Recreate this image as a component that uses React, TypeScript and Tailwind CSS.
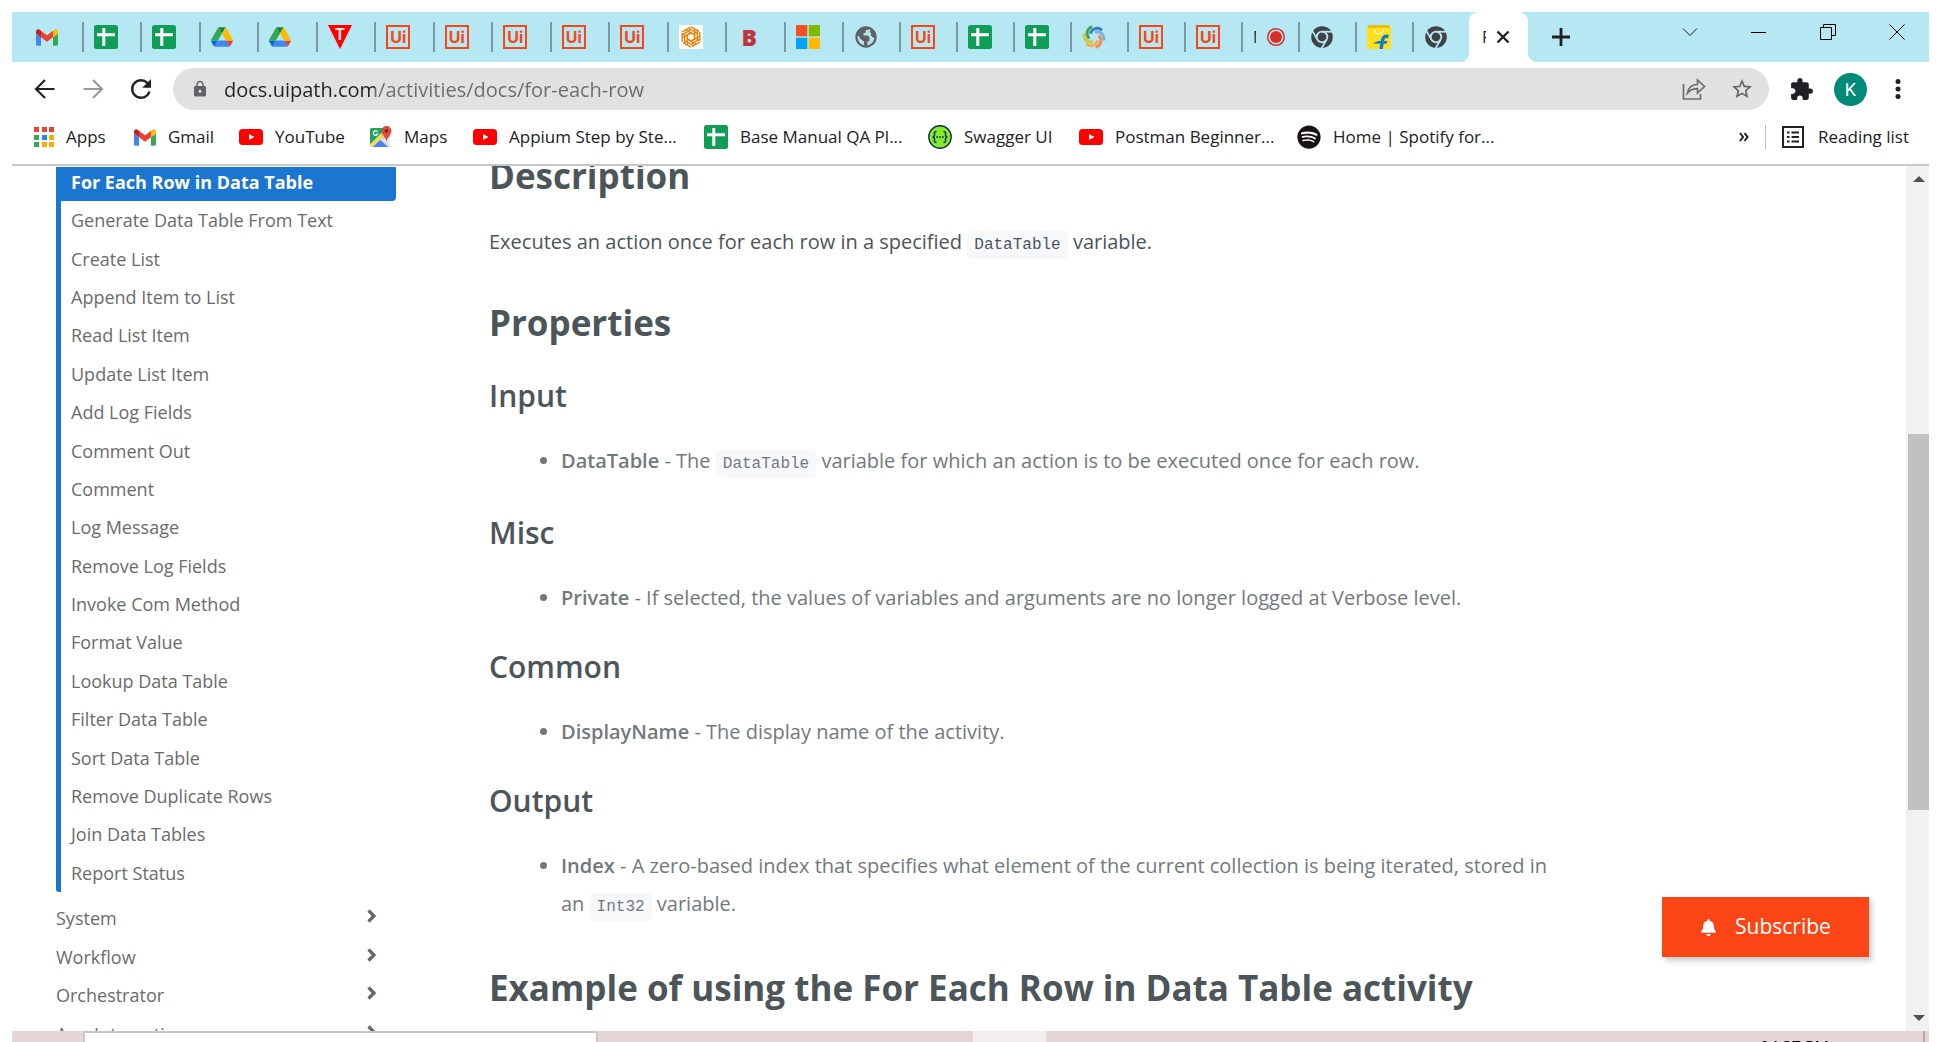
import type { ReactNode } from "react";
import { FaBell, FaSpotify } from "react-icons/fa";
import { MdExtension, MdLock, MdRefresh, MdStarBorder } from "react-icons/md";

const OPEN_SANS = "font-['Open_Sans','Noto_Sans',sans-serif]";

function Gmail() {
  return (
    <svg viewBox="52 42 88 66" className="h-[17px] w-[22px]" aria-hidden="true">
      <path fill="#4285f4" d="M58 108h14V74L52 59v43c0 3.32 2.69 6 6 6" />
      <path fill="#34a853" d="M120 108h14c3.32 0 6-2.69 6-6V59l-20 15" />
      <path fill="#fbbc04" d="M120 48v26l20-15v-8c0-7.42-8.47-11.65-14.4-7.2" />
      <path fill="#ea4335" d="M72 74V48l24 18 24-18v26L96 92" />
      <path fill="#c5221f" d="M52 51v8l20 15V48l-5.6-4.2c-5.94-4.45-14.4-.22-14.4 7.2" />
    </svg>
  );
}

function Sheets() {
  return (
    <svg viewBox="0 0 24 24" className="size-6" aria-hidden="true">
      <rect width="24" height="24" rx="2.5" fill="#109d58" />
      <path d="M9.8 3v18M3 9.8h18" stroke="#fff" strokeWidth="3" />
    </svg>
  );
}

function Drive() {
  return (
    <svg viewBox="0 0 87.3 78" className="h-5 w-[22px]" aria-hidden="true">
      <path fill="#0066da" d="m6.6 66.85 3.85 6.65c.8 1.4 1.95 2.5 3.3 3.3l13.75-23.8h-27.5c0 1.55.4 3.1 1.2 4.5z" />
      <path fill="#34a853" d="m43.65 25-13.75-23.8c-1.35.8-2.5 1.9-3.3 3.3l-25.4 44a9.06 9.06 0 0 0 -1.2 4.5h27.5z" />
      <path fill="#ea4335" d="m73.55 76.8c1.35-.8 2.5-1.9 3.3-3.3l1.6-2.75 7.65-13.25c.8-1.4 1.2-2.95 1.2-4.5h-27.502l5.852 11.5z" />
      <path fill="#188038" d="m43.65 25 13.75-23.8c-1.35-.8-2.9-1.2-4.5-1.2h-18.5c-1.6 0-3.15.45-4.5 1.2z" />
      <path fill="#4285f4" d="m59.8 53h-32.3l-13.75 23.8c1.35.8 2.9 1.2 4.5 1.2h50.8c1.6 0 3.15-.45 4.5-1.2z" />
      <path fill="#fbbc04" d="m73.4 26.5-12.7-22c-.8-1.4-1.95-2.5-3.3-3.3l-13.75 23.8 16.15 28h27.45c0-1.55-.4-3.1-1.2-4.5z" />
    </svg>
  );
}

function Triangle() {
  return (
    <svg viewBox="0 0 24 24" className="size-6" aria-hidden="true">
      <path d="M0 0h24L12 24z" fill="#fe0000" />
      <text x="12" y="15" textAnchor="middle" fontFamily="Liberation Sans" fontWeight="700" fontSize="16" fill="#dfe6e9">
        T
      </text>
    </svg>
  );
}

function UiPath() {
  return (
    <span className="flex size-6 items-center justify-center border-[2px] border-[#fa4616] font-['Inter',sans-serif] text-[16px] leading-none font-bold text-[#fa4616]">
      Ui
    </span>
  );
}

function Hexagon() {
  const sides = [0, 60, 120, 180, 240, 300];
  return (
    <svg viewBox="-12 -12 24 24" className="size-6" aria-hidden="true">
      <rect x="-12" y="-12" width="24" height="24" fill="#fff" />
      <g fill="none" stroke="#e8830c" strokeWidth="1.4">
        {sides.map((a) => (
          <path key={a} transform={`rotate(${a})`} d="M0 -10.200 8 -5.600M-3 -9 6 -3.800M-4.800 -7 3.500 -2.200V1" />
        ))}
      </g>
    </svg>
  );
}

function LetterB() {
  return (
    <span className="flex size-6 items-center justify-center text-[23px] leading-none font-extrabold text-[#c0353a]">B</span>
  );
}

function Windows() {
  return (
    <svg viewBox="0 0 24 24" className="size-6" aria-hidden="true">
      <path fill="#f25022" d="M0 0h11.300v11.300H0z" />
      <path fill="#7fba00" d="M12.700 0H24v11.300H12.700z" />
      <path fill="#00a4ef" d="M0 12.700h11.300V24H0z" />
      <path fill="#ffb900" d="M12.700 12.700H24V24H12.700z" />
    </svg>
  );
}

function Globe() {
  return (
    <svg viewBox="0 0 24 24" className="size-6" aria-hidden="true">
      <circle cx="12" cy="12" r="9.600" fill="#b9e4ec" stroke="#5f6368" strokeWidth="2.200" />
      <path fill="#5f6368" d="M2 11c0-5 4-9 10-9 1.500 0 2.600.3 3.500.8l-1 2.200h-2.700v2.200L9.500 8.500v2h4.300l1.700 2v3.300l-2 1V21l-2 1.400-1.500-2.900v-3l-3.500-2.600L4.600 11z" />
      <path fill="#5f6368" d="m17 4.500 3.600 3 1.400 4.500-2.500 1-2.700-2.600.4-2.200-1.700-1.500z" />
    </svg>
  );
}

function Swirl() {
  const arms: [number, string][] = [
    [0, "#2f7fc4"],
    [60, "#7fb0d8"],
    [120, "#f08a54"],
    [180, "#f4b04c"],
    [240, "#d3c83a"],
    [300, "#3fa25a"],
  ];
  return (
    <svg viewBox="-12 -12 24 24" className="size-6" aria-hidden="true">
      {arms.map(([a, c]) => (
        <path key={a} transform={`rotate(${a})`} fill="none" stroke={c} strokeWidth="3" strokeLinecap="round" d="M-3.200 -4.500C-1.500 -8.500 3 -10 7 -7.500" />
      ))}
    </svg>
  );
}

function Recording() {
  return (
    <span className="flex items-center">
      <span className="mr-[10px] block w-[3px] overflow-hidden text-[16px] leading-5 text-[#202124]">M</span>
      <svg viewBox="0 0 20 20" className="size-5" aria-hidden="true">
        <circle cx="10" cy="10" r="8.300" fill="none" stroke="#d93025" strokeWidth="1.500" />
        <circle cx="10" cy="10" r="6" fill="#d93025" />
      </svg>
    </span>
  );
}

function Chrome() {
  return (
    <svg viewBox="-12 -12 24 24" className="size-6" aria-hidden="true">
      <circle r="10.800" fill="#404346" />
      <circle r="5.300" fill="none" stroke="#b5e8f2" strokeWidth="1.800" />
      <g stroke="#b5e8f2" strokeWidth="1.800">
        <path d="M0 -5.300H11" />
        <path transform="rotate(120)" d="M0 -5.300H11" />
        <path transform="rotate(240)" d="M0 -5.300H11" />
      </g>
    </svg>
  );
}

function Flipkart() {
  return (
    <svg viewBox="0 0 24 24" className="size-6" aria-hidden="true">
      <path d="M2 0h20l2 3v21H0V3z" fill="#ffe11b" />
      <path d="M2 0h20l1.400 3H.6z" fill="#e8bd10" />
      <path d="M7.500 4.500c.5 6 8.500 6 9 0" fill="none" stroke="#fff" strokeWidth="1.200" />
      <path d="M21.500 11.500c-4-1-5.500 1-6 4L14 24" fill="none" stroke="#1177d8" strokeWidth="3.400" />
      <path d="M5.500 18.500 11 16h9.500l-1 2.800z" fill="#1177d8" />
    </svg>
  );
}

function YouTube() {
  return (
    <svg viewBox="0 0 24 16" className="h-4 w-6" aria-hidden="true">
      <rect width="24" height="16" rx="3.500" fill="#f00" />
      <path d="m10 5 5.500 3L10 11z" fill="#fff" />
    </svg>
  );
}

function AppsGrid() {
  const cells: [number, number, string][] = [
    [0, 0, "#ea4335"], [8, 0, "#ea4335"], [15, 0, "#ea4335"],
    [0, 8, "#34a853"], [8, 8, "#1a8cf0"], [15, 8, "#fbab05"],
    [0, 15, "#34a853"], [8, 15, "#fbab05"], [15, 15, "#fbab05"],
  ];
  return (
    <svg viewBox="0 0 20 20" className="size-5" aria-hidden="true">
      {cells.map(([x, y, c]) => (
        <rect key={`${x}-${y}`} x={x} y={y} width="5" height="5" fill={c} />
      ))}
    </svg>
  );
}

function Maps() {
  return (
    <svg viewBox="0 0 22 22" className="size-[22px]" aria-hidden="true">
      <rect y="2" width="20" height="19" rx="2" fill="#c9cdd0" />
      <path d="M2 2h14L0 18.500V4a2 2 0 0 1 2-2z" fill="#1fa463" />
      <path d="M14.500 5 0 18.500V20l1.500 1L17 7z" fill="#fddc3f" />
      <path d="m10 14 8 7H3z" fill="#4285f4" />
      <path d="M11 13l9 8V12z" fill="#e7eaec" />
      <path d="M16.500 0a5 5 0 0 0-5 5c0 4 4 5 5 11 1-6 5-7 5-11a5 5 0 0 0-5-5z" fill="#dd4b3e" />
      <circle cx="16.500" cy="5" r="1.800" fill="#822018" />
      <path d="M7.600 5.700A2.300 2.300 0 1 0 7.800 8H5.700" fill="none" stroke="#fff" strokeWidth="1.200" />
    </svg>
  );
}

function Swagger() {
  return (
    <svg viewBox="0 0 24 24" className="size-6" aria-hidden="true">
      <circle cx="12" cy="12" r="11.200" fill="#85ea2d" stroke="#173647" strokeWidth="1.400" />
      <g fill="none" stroke="#173647" strokeWidth="1.500">
        <path d="M8.500 6.500c-2.500 0-2 1.500-2 3 0 1.600-.4 2.500-2 2.500 1.600 0 2 .9 2 2.500 0 1.500-.5 3 2 3" />
        <path d="M15.500 6.500c2.500 0 2 1.500 2 3 0 1.600.4 2.500 2 2.500-1.600 0-2 .9-2 2.500 0 1.500.5 3-2 3" />
      </g>
      <g fill="#173647">
        <circle cx="9.200" cy="12" r=".9" />
        <circle cx="12" cy="12" r=".9" />
        <circle cx="14.800" cy="12" r=".9" />
      </g>
    </svg>
  );
}

type Tab = { name: string; icon: ReactNode };

const wideTabs: Tab[] = [
  { name: "Sheet 1", icon: <Sheets /> },
  { name: "Sheet 2", icon: <Sheets /> },
  { name: "Drive 1", icon: <Drive /> },
  { name: "Drive 2", icon: <Drive /> },
  { name: "Tutorial", icon: <Triangle /> },
  { name: "UiPath 1", icon: <UiPath /> },
  { name: "UiPath 2", icon: <UiPath /> },
  { name: "UiPath 3", icon: <UiPath /> },
  { name: "UiPath 4", icon: <UiPath /> },
  { name: "UiPath 5", icon: <UiPath /> },
  { name: "Hexagon", icon: <Hexagon /> },
  { name: "B", icon: <LetterB /> },
  { name: "Microsoft", icon: <Windows /> },
];

const narrowTabs: Tab[] = [
  { name: "Untitled", icon: <Globe /> },
  { name: "UiPath 6", icon: <UiPath /> },
  { name: "Sheet 3", icon: <Sheets /> },
  { name: "Sheet 4", icon: <Sheets /> },
  { name: "Swirl", icon: <Swirl /> },
  { name: "UiPath 7", icon: <UiPath /> },
  { name: "UiPath 8", icon: <UiPath /> },
  { name: "Meeting", icon: <Recording /> },
  { name: "Chrome 1", icon: <Chrome /> },
  { name: "Flipkart", icon: <Flipkart /> },
  { name: "Chrome 2", icon: <Chrome /> },
];

function TabButton({ tab }: { tab: Tab }) {
  return (
    <button aria-label={tab.name} className="flex h-[30px] min-w-0 flex-1 items-center border-l-2 border-[#7c9aa3] pl-[10px]">
      {tab.icon}
    </button>
  );
}

function TabStrip() {
  return (
    <div className="flex h-[50px] items-center bg-[#b5e8f2]">
      <button aria-label="Gmail" className="flex w-[70px] shrink-0 items-center pl-6">
        <Gmail />
      </button>
      <div className="flex w-[760px] shrink-0">
        {wideTabs.map((t) => (
          <TabButton key={t.name} tab={t} />
        ))}
      </div>
      <div className="flex w-[627px] shrink-0">
        {narrowTabs.map((t) => (
          <TabButton key={t.name} tab={t} />
        ))}
      </div>
      <div className="relative flex h-full w-[59px] shrink-0 items-center rounded-t-[9px] bg-white pl-[13px] text-[#202124]">
        <span className="absolute bottom-0 -left-[9px] size-[9px] bg-[radial-gradient(circle_at_0_0,#b5e8f2_9px,#ffffff_9px)]" />
        <span className="absolute -right-[9px] bottom-0 size-[9px] bg-[radial-gradient(circle_at_100%_0,#b5e8f2_9px,#ffffff_9px)]" />
        <span className="block w-[4px] overflow-hidden text-[16px] leading-5">F</span>
        <button aria-label="Close tab" className="ml-[10px]">
          <svg viewBox="0 0 14 14" className="size-[14px]" aria-hidden="true">
            <path d="m1.500 1.500 11 11m0-11-11 11" stroke="#202124" strokeWidth="2.400" />
          </svg>
        </button>
      </div>
      <button aria-label="New tab" className="ml-6">
        <svg viewBox="0 0 18 18" className="size-[18px]" aria-hidden="true">
          <path d="M9 0v18M0 9h18" stroke="#202124" strokeWidth="2.800" />
        </svg>
      </button>
      <div className="-mr-[2px] ml-auto flex self-start pt-3">
        <button aria-label="Search tabs" className="flex w-[69px] justify-center">
          <svg viewBox="0 0 16 16" className="size-4" fill="none" stroke="#1b1b1b" aria-hidden="true">
            <path d="m1 4.500 7 7 7-7" />
          </svg>
        </button>
        <button aria-label="Minimize" className="flex w-[69px] justify-center">
          <svg viewBox="0 0 16 16" className="size-4" stroke="#000" aria-hidden="true">
            <path d="M0 8.500h15" />
          </svg>
        </button>
        <button aria-label="Restore" className="flex w-[69px] justify-center">
          <svg viewBox="0 0 16 16" className="size-4" fill="none" stroke="#000" aria-hidden="true">
            <path d="M.5 3.500h11v12H.5zM3.500 3.500v-3h12v11h-4" />
          </svg>
        </button>
        <button aria-label="Close" className="flex w-[69px] justify-center">
          <svg viewBox="0 0 16 16" className="size-4" stroke="#000" aria-hidden="true">
            <path d="m.5.5 15 15m0-15-15 15" />
          </svg>
        </button>
      </div>
    </div>
  );
}

function Toolbar() {
  return (
    <div className="flex h-[54px] items-center pr-[21px] pl-[22px]">
      <button aria-label="Back" className="w-12 shrink-0">
        <svg viewBox="0 0 22 20" className="h-5 w-[22px]" fill="none" stroke="#202124" strokeWidth="2.200" aria-hidden="true">
          <path d="M20.500 10H2.500M11 1 2 10l9 9" />
        </svg>
      </button>
      <button aria-label="Forward" className="w-12 shrink-0">
        <svg viewBox="0 0 22 20" className="h-5 w-[22px]" fill="none" stroke="#9a9a9a" strokeWidth="2.200" aria-hidden="true">
          <path d="M1.500 10h18M11 1l9 9-9 9" />
        </svg>
      </button>
      <button aria-label="Reload" className="w-[43px] shrink-0">
        <MdRefresh className="-ml-1 size-[30px] text-[#202124]" />
      </button>
      <div className="flex h-[42px] min-w-0 flex-1 items-center rounded-full bg-[#e1e1e1] pr-[15px] pl-[18px]">
        <MdLock className="size-[18px] shrink-0 text-[#5f6368]" />
        <input
          aria-label="Address"
          readOnly
          value="docs.uipath.com/activities/docs/for-each-row"
          className="ml-[15px] min-w-0 flex-1 bg-[linear-gradient(to_right,#202124_151px,#686c70_151px)] bg-clip-text pt-[2px] text-[20px] leading-7 text-transparent outline-none"
        />
        <button aria-label="Share" className="mr-6">
          <svg viewBox="0 0 24 22" className="h-[22px] w-6" fill="none" stroke="#6a6d70" strokeWidth="1.700" aria-hidden="true">
            <path d="M1.500 6v15h17v-5" />
            <path d="M5.500 15C6.500 9.500 10 6.500 15.500 6.500V2l7 6.500-7 6.500v-4.300c-4.500 0-7.500 1.300-10 4.300z" />
          </svg>
        </button>
        <button aria-label="Bookmark this page">
          <MdStarBorder className="size-6 text-[#5f6368]" />
        </button>
      </div>
      <button aria-label="Extensions" className="ml-[20px]">
        <MdExtension className="size-[25px] text-[#202124]" />
      </button>
      <button
        aria-label="Profile"
        className="ml-[20px] flex size-[33px] items-center justify-center rounded-full bg-[#008a78] font-['Roboto',sans-serif] text-[18px] text-white"
      >
        K
      </button>
      <button aria-label="Menu" className="ml-[21px]">
        <svg viewBox="0 0 20 20" className="size-5" fill="#202124" aria-hidden="true">
          <circle cx="10" cy="2.500" r="2.500" />
          <circle cx="10" cy="10" r="2.500" />
          <circle cx="10" cy="17.500" r="2.500" />
        </svg>
      </button>
    </div>
  );
}

const bookmarks = [
  { label: "Apps", icon: <AppsGrid />, width: "w-[100px]" },
  { label: "Gmail", icon: <Gmail />, width: "w-[105px]" },
  { label: "YouTube", icon: <YouTube />, width: "w-[131px]" },
  { label: "Maps", icon: <Maps />, width: "w-[103px]" },
  { label: "Appium Step by Ste...", icon: <YouTube />, width: "w-[231px]" },
  { label: "Base Manual QA Pl...", icon: <Sheets />, width: "w-[224px]" },
  { label: "Swagger UI", icon: <Swagger />, width: "w-[151px]" },
  { label: "Postman Beginner...", icon: <YouTube />, width: "w-[218px]" },
  { label: "Home | Spotify for...", icon: <FaSpotify className="size-6 text-[#191414]" />, width: "w-[200px]" },
];

function BookmarksBar() {
  return (
    <div className="flex h-[50px] items-center border-b-2 border-[#c8c8c8] pr-5 pb-[6px] pl-[22px] text-[17px] text-[#202124]">
      {bookmarks.map((b) => (
        <a key={b.label} href="#" className={`flex shrink-0 items-center gap-3 whitespace-nowrap ${b.width}`}>
          {b.icon}
          {b.label}
        </a>
      ))}
      <button aria-label="More bookmarks" className="ml-auto">
        <svg viewBox="0 0 10 10" className="size-[10px]" fill="none" stroke="#202124" strokeWidth="2" aria-hidden="true">
          <path d="m1 1 3 4-3 4M5.500 1l3 4-3 4" />
        </svg>
      </button>
      <span className="ml-4 h-6 w-px bg-[#bdc1c6]" />
      <button className="ml-4 flex items-center gap-[14px]">
        <svg viewBox="0 0 22 22" className="size-[22px]" aria-hidden="true">
          <rect x="1" y="1" width="20" height="20" fill="none" stroke="#202124" strokeWidth="2" />
          <path d="M5 6.500h2.500M5 11h2.500M5 15.500h2.500M9.500 6.500H17M9.500 11H17M9.500 15.500H17" stroke="#202124" strokeWidth="2.200" />
        </svg>
        Reading list
      </button>
    </div>
  );
}

const activities = [
  "Generate Data Table From Text",
  "Create List",
  "Append Item to List",
  "Read List Item",
  "Update List Item",
  "Add Log Fields",
  "Comment Out",
  "Comment",
  "Log Message",
  "Remove Log Fields",
  "Invoke Com Method",
  "Format Value",
  "Lookup Data Table",
  "Filter Data Table",
  "Sort Data Table",
  "Remove Duplicate Rows",
  "Join Data Tables",
  "Report Status",
];

const groups = ["System", "Workflow", "Orchestrator", "App Integration"];

function Sidebar() {
  return (
    <nav className="w-[340px] shrink-0 pt-px text-[18px] leading-6 text-[#6b6b6b]">
      <ul className="flex h-[725px] flex-col rounded-b-[3px] border-l-[5px] border-[#1b76d2]">
        <li>
          <a href="#" className="-ml-px flex h-[34px] items-center rounded-br bg-[#1b76d2] pb-1 pl-[11px] font-bold text-white">
            For Each Row in Data Table
          </a>
        </li>
        {activities.map((a) => (
          <li key={a} className="flex flex-1 items-center pl-[10px]">
            <a href="#">{a}</a>
          </li>
        ))}
      </ul>
      <ul className="mt-[7px] grid h-[154px] grid-rows-4">
        {groups.map((g) => (
          <li key={g} className="flex items-center justify-between pr-[19px]">
            <a href="#">{g}</a>
            <button aria-label={`Expand ${g}`} className="pb-1">
              <svg viewBox="0 0 10 14" className="h-[14px] w-[10px]" fill="none" stroke="#666" strokeWidth="3.200" aria-hidden="true">
                <path d="m1.500 1.500 5.500 5.500-5.500 5.500" />
              </svg>
            </button>
          </li>
        ))}
      </ul>
    </nav>
  );
}

function Code({ children }: { children: string }) {
  return (
    <code className="rounded-[5px] bg-[#f6f8fa] px-[7px] py-[5px] font-['Liberation_Mono',monospace] text-[16px]">
      {children}
    </code>
  );
}

function H2({ children }: { children: string }) {
  return <h2 className="mt-[39px] mb-[27px] text-[35px] leading-[46px] font-bold">{children}</h2>;
}

function Property({ group, name, children }: { group: string; name: string; children: ReactNode }) {
  return (
    <section>
      <h3 className="text-[30px] leading-10 font-semibold">{group}</h3>
      <ul className="mt-[26px] ml-[72px] list-disc leading-[38px] text-[#72797d]">
        <li>
          <strong className="font-semibold">{name}</strong> - {children}
        </li>
      </ul>
    </section>
  );
}

function Article() {
  return (
    <article className="-mt-[52px] ml-[93px] max-w-[1075px] min-w-0 flex-1 text-[20px] leading-8 text-[#4c555a]">
      <H2>Description</H2>
      <p>
        Executes an action once for each row in a specified <Code>DataTable</Code> variable.
      </p>
      <H2>Properties</H2>
      <div className="flex flex-col gap-[30px] pt-[3px]">
        <Property group="Input" name="DataTable">
          The <Code>DataTable</Code> variable for which an action is to be executed once for each row.
        </Property>
        <Property group="Misc" name="Private">
          If selected, the values of variables and arguments are no longer logged at Verbose level.
        </Property>
        <Property group="Common" name="DisplayName">
          The display name of the activity.
        </Property>
        <Property group="Output" name="Index">
          A zero-based index that specifies what element of the current collection is being iterated, stored in an{" "}
          <Code>Int32</Code> variable.
        </Property>
      </div>
      <H2>Example of using the For Each Row in Data Table activity</H2>
    </article>
  );
}

function Scrollbar() {
  return (
    <div className="ml-auto flex w-[23px] shrink-0 flex-col items-end bg-[#f1f1f1]">
      <button aria-label="Scroll up" className="flex h-[26px] w-[21px] items-center justify-center">
        <svg viewBox="0 0 12 6" className="h-[6px] w-3" fill="#505050" aria-hidden="true">
          <path d="M6 0l6 6H0z" />
        </svg>
      </button>
      <div className="flex w-[21px] flex-1 flex-col">
        <span className="flex-[242]" />
        <span className="flex-[376] bg-[#c1c1c1]" />
        <span className="flex-[195]" />
      </div>
      <button aria-label="Scroll down" className="flex h-[26px] w-[21px] items-center justify-center">
        <svg viewBox="0 0 12 6" className="h-[6px] w-3" fill="#505050" aria-hidden="true">
          <path d="M0 0h12L6 6z" />
        </svg>
      </button>
    </div>
  );
}

function Taskbar() {
  return (
    <div className="flex h-[11px] shrink-0 items-start bg-[#e5d5d6]">
      <span className="ml-[71px] h-full w-[515px] border-2 border-b-0 border-[#c8c8c8] bg-white" />
      <span className="ml-[375px] h-full w-[73px] bg-[#f3eeee]" />
      <time className="mt-[6px] mr-[94px] ml-auto text-[16px] leading-5 text-black">04:37 PM</time>
      <span className="mr-1 h-full w-[2px] bg-[#b9a9aa]" />
    </div>
  );
}

export default function App() {
  return (
    <div className={`flex h-screen flex-col overflow-hidden bg-white pt-3 pr-[13px] pl-3 ${OPEN_SANS}`}>
      <header className="shrink-0">
        <TabStrip />
        <Toolbar />
        <BookmarksBar />
      </header>
      <main className="relative flex min-h-0 flex-1 overflow-hidden pl-11">
        <Sidebar />
        <Article />
        <Scrollbar />
        <button className="absolute right-[60px] bottom-[74px] flex h-[60px] w-[207px] items-center gap-[18px] bg-[#fa4616] pl-[38px] text-[21px] font-medium text-white shadow-[3px_4px_5px_rgba(0,0,0,0.2)]">
          <FaBell className="size-[17px]" />
          Subscribe
        </button>
      </main>
      <Taskbar />
    </div>
  );
}
